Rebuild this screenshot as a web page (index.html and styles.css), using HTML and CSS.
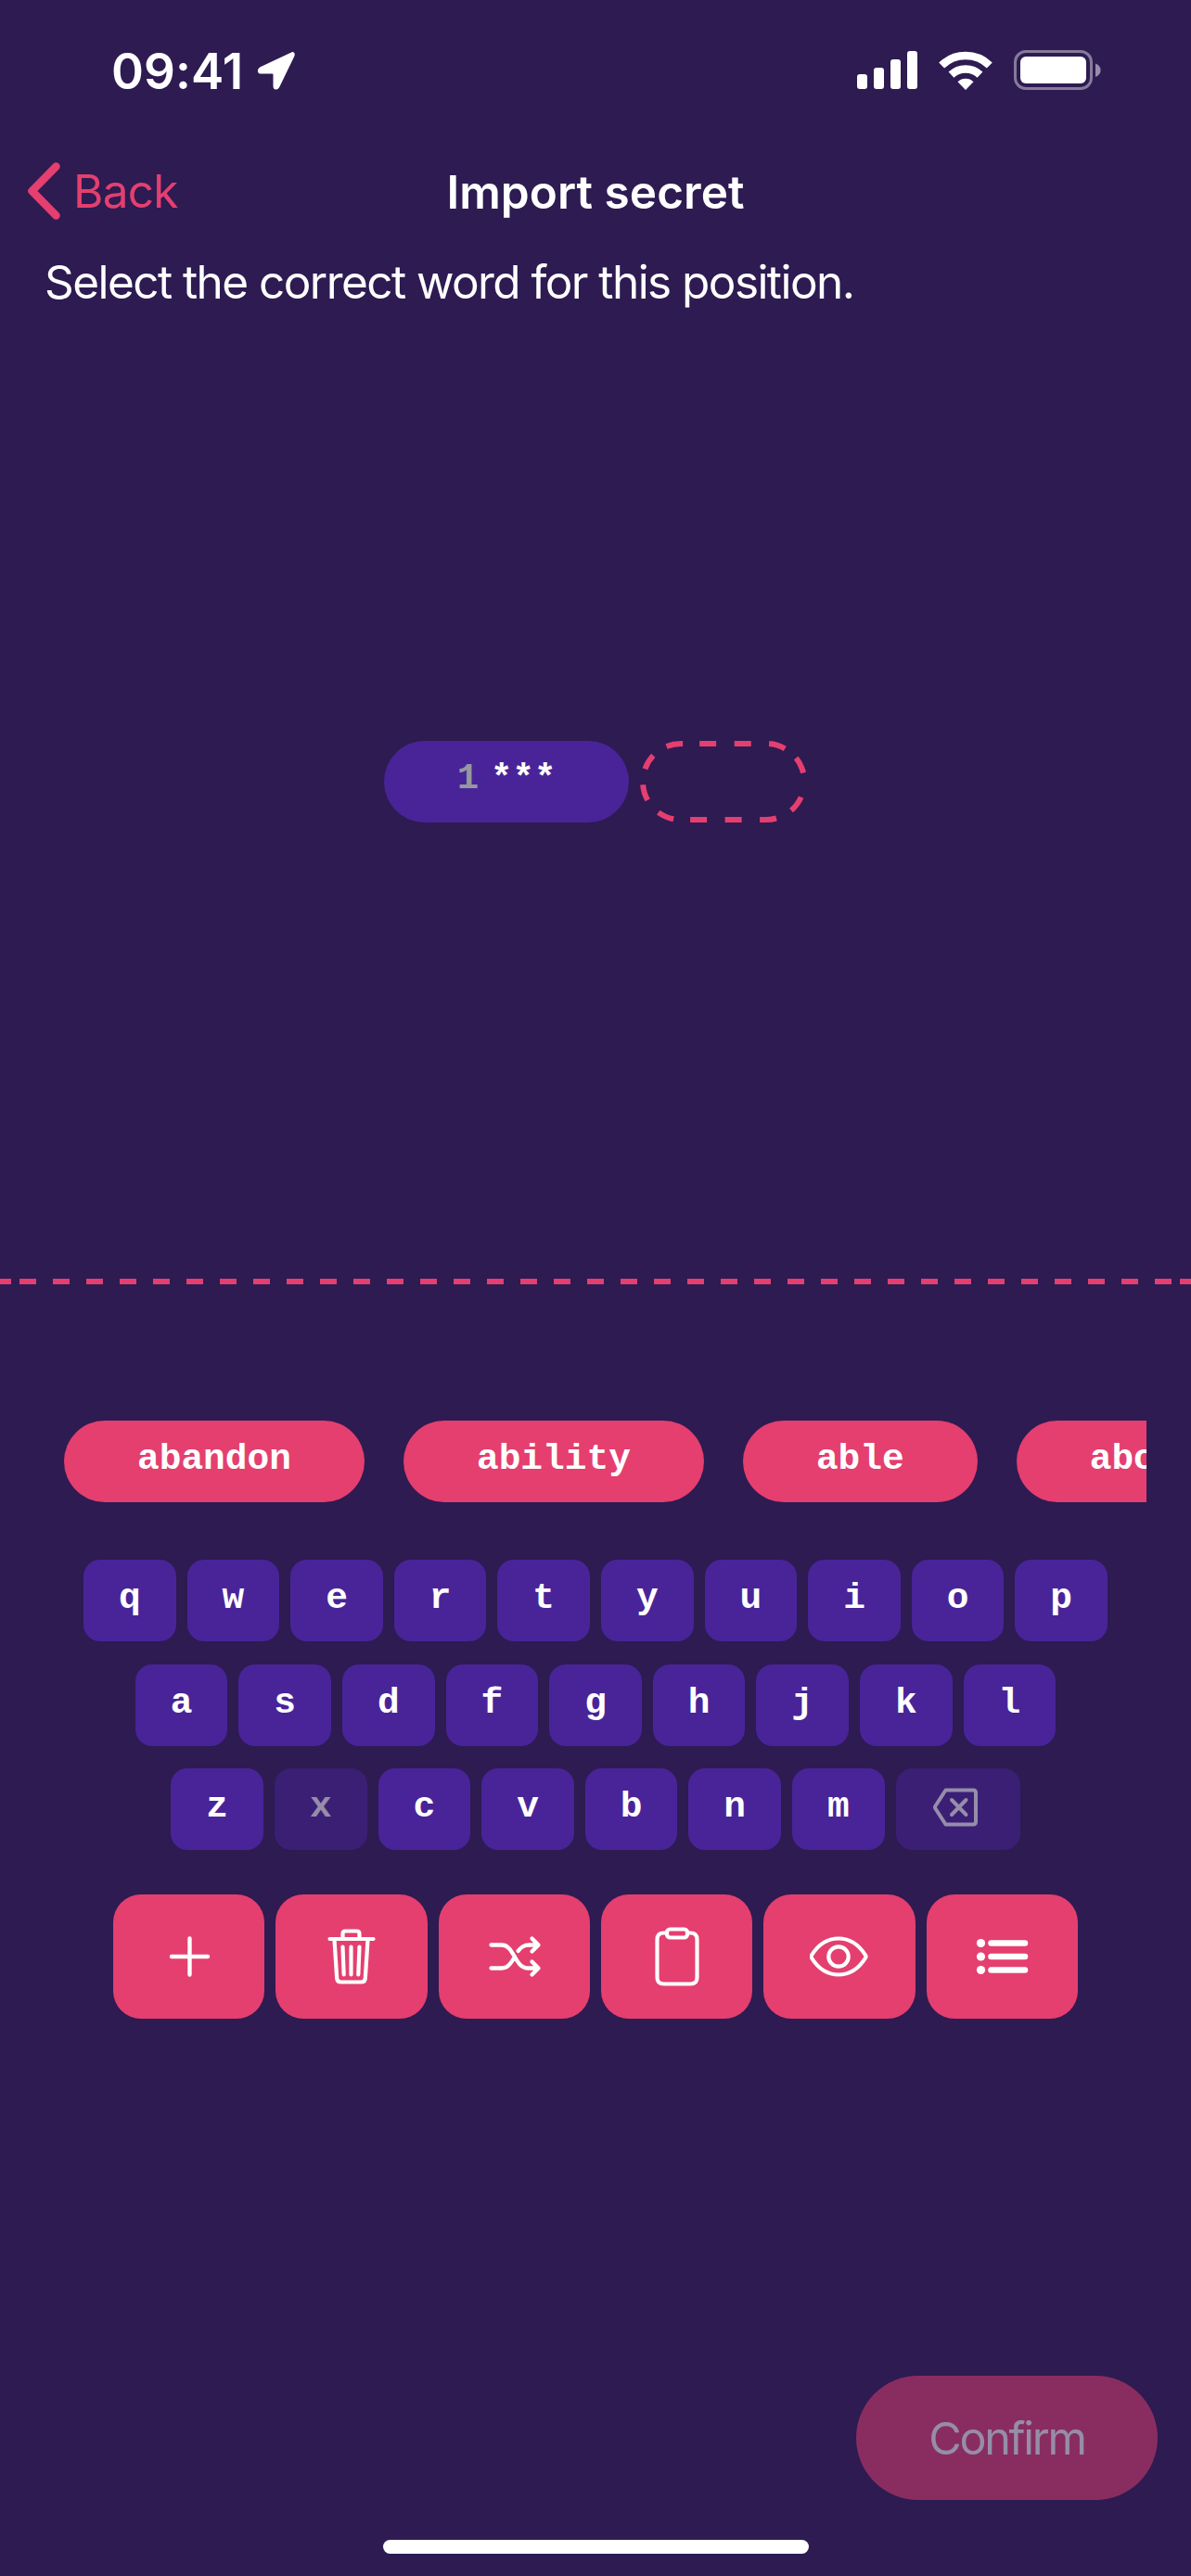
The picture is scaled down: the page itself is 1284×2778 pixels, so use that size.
FILE: index.html
```html
<!DOCTYPE html>
<html lang="en">
<head>
<meta charset="utf-8">
<title>Import secret</title>
<link rel="stylesheet" href="styles.css">
</head>
<body>
<div class="screen">
  <header class="status">
    <div class="status-left">
      <span class="time">09:41</span>
      <svg class="location" width="42" height="42" viewBox="0 0 42 42"><path d="M37 2.600 3.500 18.500C1 20 1.500 23.500 4 23.500H16.500Q18.500 23.500 18.500 25.500V38C18.500 41 22 41.500 23.300 38.700L39.500 5C40.500 2.500 39 1.500 37 2.600Z" fill="#fff" stroke="#fff" stroke-width="2"/></svg>
    </div>
    <div class="status-right">
      <svg width="65" height="42" viewBox="0 0 65 42" fill="#fff"><rect y="25" width="11" height="16" rx="3"/><rect x="18" y="18" width="11" height="23" rx="3"/><rect x="36" y="9" width="11" height="32" rx="3"/><rect x="54" width="11" height="41" rx="3"/></svg>
      <svg class="wifi" width="58" height="43" viewBox="0 0 58 43" fill="none" stroke="#fff"><path d="M3.200 15.500A37 37 0 0 1 54.800 15.500" stroke-width="8.500"/><path d="M13.500 25.700A22.500 22.500 0 0 1 44.500 25.700" stroke-width="8.500"/><path d="M20.500 33.200A12.500 12.500 0 0 1 37.500 33.200L29 42Z" fill="#fff" stroke="none"/></svg>
      <svg width="95" height="44" viewBox="0 0 95 44"><rect x="1.500" y="1.500" width="82" height="40" rx="11.500" fill="none" stroke="#fff" stroke-opacity=".42" stroke-width="3"/><rect x="7" y="7" width="71" height="29" rx="6" fill="#fff"/><path d="M88 14.500C95.500 17.500 95.500 26 88 29Z" fill="#fff" fill-opacity=".5"/></svg>
    </div>
  </header>

  <nav class="navbar">
    <a class="back">
      <svg width="36" height="64" viewBox="0 0 36 64"><path d="M31.500 5.500 5.500 32 31.500 58.500" fill="none" stroke="#e43f6f" stroke-width="8.500" stroke-linecap="round" stroke-linejoin="round"/></svg>
      <span>Back</span>
    </a>
    <h1 class="title">Import secret</h1>
  </nav>

  <p class="hint">Select the correct word for this position.</p>

  <main class="slots">
    <div class="slot"><span class="slot-number">1</span><span>***</span></div>
    <svg class="slot-empty" width="180" height="88" viewBox="0 0 180 88"><path d="M147 83.500A41 41 0 0 1 136 85H44A41 41 0 0 1 44 3H136A41 41 0 0 1 163 75" fill="none" stroke="#e43f6f" stroke-width="6" stroke-dasharray="18 19.500 18 19.500 18 18 18 17.600 17.500 17.400 17 17.300 18 18 18 19.600 18 19.400 18 15.700 18 26.500 18.500 200"/></svg>
  </main>

  <svg class="divider" width="1284" height="6" viewBox="0 0 1284 6"><path d="M0 3H12M1272 3H1284" stroke="#e43f6f" stroke-width="6"/><path d="M21 3H1264" stroke="#e43f6f" stroke-width="6" stroke-dasharray="18 18"/></svg>

  <section class="words">
    <button class="word">abandon</button>
    <button class="word">ability</button>
    <button class="word">able</button>
    <button class="word">about</button>
  </section>

  <section class="keyboard">
    <div class="row"><button class="key">q</button><button class="key">w</button><button class="key">e</button><button class="key">r</button><button class="key">t</button><button class="key">y</button><button class="key">u</button><button class="key">i</button><button class="key">o</button><button class="key">p</button></div>
    <div class="row"><button class="key">a</button><button class="key">s</button><button class="key">d</button><button class="key">f</button><button class="key">g</button><button class="key">h</button><button class="key">j</button><button class="key">k</button><button class="key">l</button></div>
    <div class="row"><button class="key">z</button><button class="key off">x</button><button class="key">c</button><button class="key">v</button><button class="key">b</button><button class="key">n</button><button class="key">m</button><button class="key wide off"><svg width="48" height="43" viewBox="0 -2 48 43" fill="none" stroke="#fff" stroke-width="4" stroke-linecap="round" stroke-linejoin="round"><path d="M13.500 .500H43Q46 .500 46 3.500V34.500Q46 37.500 43 37.500H13.500L2.500 20.500Q1.500 19 2.500 17.500Z"/><path d="M20 11 35.500 27M35.500 11 20 27"/></svg></button></div>
  </section>

  <section class="actions">
    <button class="action"><svg viewBox="0 0 64 64"><path d="M32.500 12.500V51.500M13 32H52" stroke-width="4.400"/></svg></button>
    <button class="action"><svg viewBox="0 0 64 64"><path d="M8.500 13H55.500M22.500 12V7.500Q22.500 4.500 25.500 4.500H37.500Q40.500 4.500 40.500 7.500V12M13.500 14 16.200 55.500Q16.500 59.500 20.500 59.500H42.500Q46.500 59.500 46.800 55.500L49.500 14M22.500 21.500 23.700 51.500M31.500 21.500V51.500M40.500 21.500 39.300 51.500"/></svg></button>
    <button class="action"><svg viewBox="0 0 64 64"><g transform="translate(1.500 0)"><path d="M6 19.500H17.500C31 19.500 31 44.500 46 44.500H56.500M6 44.500H17.500C23.500 44.500 27 40 31.500 32M35 26C38.500 22 41 19.500 47 19.500H56.500M50 12.500 57 19.500 50 26.500M50 37.500 57 44.500 50 51.500" stroke-width="4.300"/></g></svg></button>
    <button class="action"><svg viewBox="0 0 64 64"><path d="M21 6.500H17.500Q10.500 6.500 10.500 13.500V54.500Q10.500 61.500 17.500 61.500H46.500Q53.500 61.500 53.500 54.500V13.500Q53.500 6.500 46.500 6.500H43"/><rect x="21" y="2.500" width="22" height="9" rx="3.500"/></svg></button>
    <button class="action"><svg viewBox="0 0 64 64"><path d="M2 30.500C17 6.500 45 6.500 60 30.500Q61 32 60 33.500C45 57.500 17 57.500 2 33.500Q1 32 2 30.500Z"/><circle cx="31" cy="32" r="10.700"/></svg></button>
    <button class="action"><svg viewBox="0 0 64 64"><path d="M20.500 17.500H57M20.500 32H57M20.500 46.500H57" stroke-width="6.500"/><g fill="#fff" stroke="none"><circle cx="9.500" cy="17.500" r="4.600"/><circle cx="9.500" cy="32" r="4.600"/><circle cx="9.500" cy="46.500" r="4.600"/></g></svg></button>
  </section>

  <footer class="footer">
    <button class="confirm">Confirm</button>
    <div class="home"></div>
  </footer>
</div>
</body>
</html>
```
FILE: styles.css
```css
* { box-sizing: border-box; }
body { margin: 0; background: #2d1b52; }
button { border: 0; padding: 0; margin: 0; font: inherit; color: inherit; }
svg { display: block; flex: none; }
.screen {
  width: 1284px; height: 2778px; overflow: hidden;
  display: flex; flex-direction: column;
  background: #2d1b52; color: #fff;
  font-family: Inter, "Liberation Sans", sans-serif;
  font-size: 49.500px;
}
.status {
  height: 152px; padding: 0 96px 0 120px;
  display: flex; justify-content: space-between; align-items: center;
}
.status-left { display: flex; align-items: center; gap: 17px; }
.time { font-size: 53px; font-weight: 600; letter-spacing: .1px; line-height: 60px; width: 140px; padding-top: 2px; white-space: nowrap; }
.status-right { display: flex; align-items: center; gap: 23px; }
.navbar {
  height: 108px; padding: 0 29px; flex: none;
  display: grid; grid-template-columns: 1fr auto 1fr; align-items: center;
}
.back { display: flex; align-items: center; gap: 14px; color: #e43f6f; letter-spacing: -.7px; }
.title { margin: 1px 0 0; font-size: 49.500px; font-weight: 600; letter-spacing: .05px; }
.hint { margin: 14px 0 0; padding-left: 48px; line-height: 60px; letter-spacing: -1.560px; white-space: nowrap; }
.slots {
  height: 88px; margin-top: 465px; flex: none;
  display: flex; justify-content: center; gap: 12px;
  font: 700 39px "Liberation Mono", monospace;
}
.slot {
  width: 264px; border-radius: 44px; background: #492498;
  display: flex; justify-content: center; gap: 13px;
  line-height: 83px;
}
.slot-number { color: #96989f; }
.divider { margin-top: 492px; }
.words {
  margin: 147px 48px 0; padding-left: 21px;
  display: flex; gap: 42px; overflow: hidden; flex: none;
}
.word, .key { font: 700 39.500px/84px "Liberation Mono", monospace; height: 88px; padding-bottom: 4px; }
.word { flex: none; padding-left: 79px; padding-right: 79px; border-radius: 44px; background: #e43f6f; }
.keyboard { margin-top: 62px; display: flex; flex-direction: column; gap: 24.500px; }
.row { display: flex; justify-content: center; gap: 12px; }
.key { width: 99.600px; border-radius: 18px; background: #492498; }
.key.wide { width: 134px; display: flex; align-items: center; justify-content: center; padding: 0 6px 3px 0; }
.key.off { opacity: .5; }
.actions { margin-top: 48px; display: flex; justify-content: center; gap: 12px; }
.action {
  width: 163.300px; height: 134px; border-radius: 30px; background: #e43f6f;
  display: flex; align-items: center; justify-content: center;
}
.action svg { width: 64px; height: 64px; fill: none; stroke: #fff; stroke-width: 4.200; stroke-linecap: round; stroke-linejoin: round; }
.footer { margin-top: auto; height: 216px; display: flex; flex-direction: column; align-items: center; }
.confirm {
  align-self: flex-end; margin-right: 36px;
  width: 325px; height: 134px; border-radius: 67px;
  background: #e43f6f; opacity: .5; font-size: 48.500px; letter-spacing: -2.300px;
}
.home { margin-top: 43px; width: 459px; height: 15px; border-radius: 8px; background: #fff; }
```
